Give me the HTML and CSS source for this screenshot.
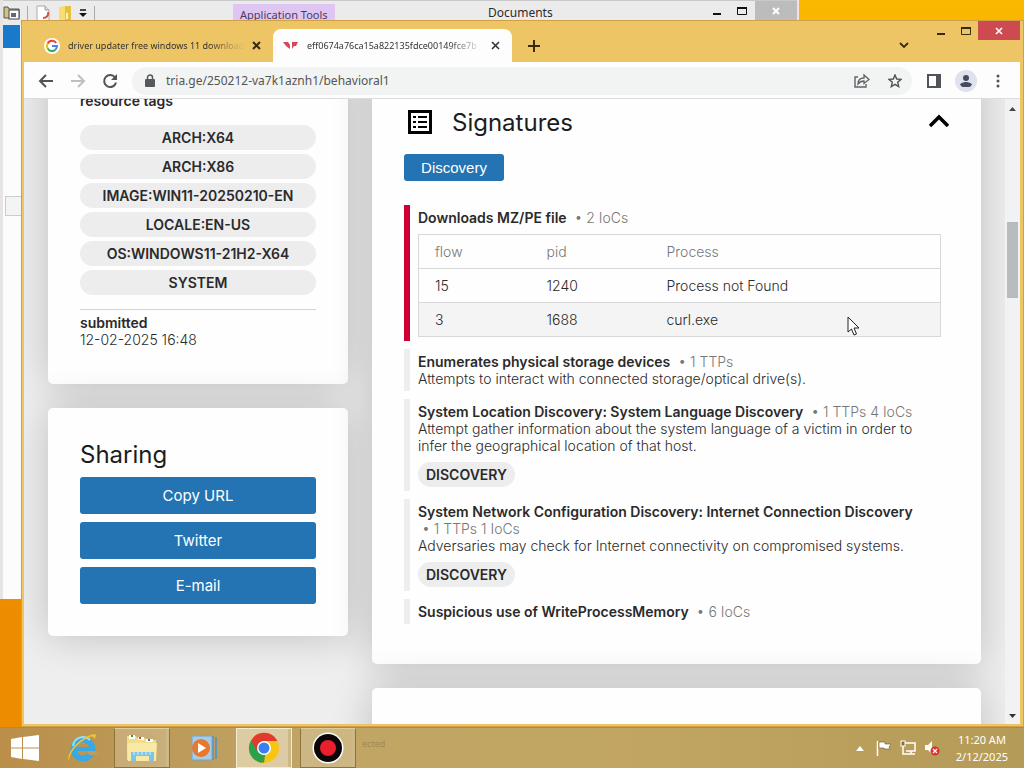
FILE: index.html
```html
<!DOCTYPE html>
<html lang="en">
<head>
    <meta charset="UTF-8">
    <meta name="viewport" content="width=device-width, initial-scale=1.0">
    <title>tria.ge - behavioral1</title>
    <link rel="stylesheet" href="styles.css">
</head>
<body>

<div class="desktop">

    <!-- explorer window behind the browser -->
    <div class="explorer">
        <div class="explorer-bar">
            <div class="quick">
                <svg width="17" height="16" viewBox="0 0 17 16"><path d="M1 2h4l1 2h10v9H1z" fill="#c9c583" stroke="#55584a"/><rect x="6" y="5" width="10" height="9" fill="#fff" stroke="#444"/><path d="M8 8h5v4H8z" fill="#667"/></svg>
                <span class="sep"></span>
                <svg width="16" height="16" viewBox="0 0 16 16"><path d="M2 1h8l4 4v11H2z" fill="#fff" stroke="#aaa"/><path d="M10 1v4h4" fill="#dde" stroke="#999"/><path d="M13 7c1 4-2 6-5 6" fill="none" stroke="#d8543c" stroke-width="2"/></svg>
                <svg width="14" height="16" viewBox="0 0 14 16"><path d="M1 2l6-1v14H1z" fill="#f7dd72"/><path d="M7 1h6v14H7z" fill="#e7bf45"/><path d="M8 8h2v6H8z" fill="#fff3b0"/></svg>
                <svg width="8" height="8" viewBox="0 0 8 8"><path d="M1 1h6" stroke="#111" stroke-width="1.5"/><path d="M0 4h8L4 8z" fill="#111"/></svg>
                <span class="sep"></span>
            </div>
            <span class="app-tools">Application Tools</span>
            <span class="explorer-title">Documents</span>
            <div class="win-buttons back">
                <button aria-label="Minimize"><svg width="8" height="10" viewBox="0 0 8 10"><path d="M0 8h8" stroke="#111" stroke-width="2"/></svg></button>
                <button aria-label="Maximize"><svg width="10" height="8" viewBox="0 0 10 8"><path d="M.5 1v6.5h9V1" fill="none" stroke="#111"/><path d="M0 1h10" stroke="#111" stroke-width="2"/></svg></button>
                <button class="close" aria-label="Close"><svg width="8" height="8" viewBox="0 0 8 8"><path d="M1 1l6 6M7 1L1 7" stroke="#fff" stroke-width="2"/></svg></button>
            </div>
        </div>
        <div class="file-tab"></div>
        <div class="nav-box"></div>
    </div>

    <!-- browser -->
    <div class="browser">
        <div class="tabstrip">
            <div class="tab">
                <svg width="16" height="16" viewBox="0 0 16 16"><circle cx="8" cy="8" r="8" fill="#fff"/><path d="M12.2 4.8A5 5 0 0 0 3.6 5.6" fill="none" stroke="#e94235" stroke-width="2"/><path d="M3.6 5.6a5 5 0 0 0 0 4.8" fill="none" stroke="#fabb05" stroke-width="2"/><path d="M3.6 10.4a5 5 0 0 0 7.8 1.3" fill="none" stroke="#34a853" stroke-width="2"/><path d="M11.4 11.7A5 5 0 0 0 13 8H8" fill="none" stroke="#4285f4" stroke-width="2"/></svg>
                <span class="tab-title">driver updater free windows 11 download</span>
                <button aria-label="Close tab"><svg width="9" height="9" viewBox="0 0 9 9"><path d="M1 1l7 7M8 1L1 8" stroke="#3a2a10" stroke-width="2"/></svg></button>
            </div>
            <div class="tab active">
                <svg width="16" height="16" viewBox="0 0 16 16"><path d="M0 4h5l2 3v4L3 8z" fill="#d9455a"/><path d="M9 4h6l-2 4h-2l-2 3z" fill="#d9455a"/></svg>
                <span class="tab-title">eff0674a76ca15a822135fdce00149fce7b</span>
                <button aria-label="Close tab"><svg width="9" height="9" viewBox="0 0 9 9"><path d="M1 1l7 7M8 1L1 8" stroke="#333" stroke-width="1.6"/></svg></button>
            </div>
            <button class="new-tab" aria-label="New tab"><svg width="12" height="12" viewBox="0 0 12 12"><path d="M6 0v12M0 6h12" stroke="#3a2a10" stroke-width="2"/></svg></button>
            <button class="tab-search" aria-label="Search tabs"><svg width="10" height="6" viewBox="0 0 10 6"><path d="M1 1l4 4 4-4" fill="none" stroke="#3a2a10" stroke-width="1.8"/></svg></button>
            <div class="win-buttons front">
                <button aria-label="Minimize"><svg width="8" height="10" viewBox="0 0 8 10"><path d="M0 8h8" stroke="#3a2a10" stroke-width="2"/></svg></button>
                <button aria-label="Maximize"><svg width="10" height="8" viewBox="0 0 10 8"><path d="M.5 1v6.5h9V1" fill="none" stroke="#3a2a10"/><path d="M0 1h10" stroke="#3a2a10" stroke-width="2"/></svg></button>
                <button class="close" aria-label="Close"><svg width="8" height="8" viewBox="0 0 8 8"><path d="M1 1l6 6M7 1L1 7" stroke="#fff" stroke-width="1.6"/></svg></button>
            </div>
        </div>

        <div class="toolbar">
            <button aria-label="Back"><svg width="16" height="16" viewBox="0 0 16 16"><path d="M15 8H2M8 2L2 8l6 6" fill="none" stroke="#505357" stroke-width="2"/></svg></button>
            <button aria-label="Forward"><svg width="16" height="16" viewBox="0 0 16 16"><path d="M1 8h13M8 2l6 6-6 6" fill="none" stroke="#bdbfc1" stroke-width="2"/></svg></button>
            <button aria-label="Reload"><svg width="16" height="16" viewBox="0 0 16 16"><path d="M13 4.5A6 6 0 1 0 14 9.5" fill="none" stroke="#505357" stroke-width="2"/><path d="M15 1v6H9z" fill="#505357"/></svg></button>
            <div class="omnibox">
                <svg width="10" height="13" viewBox="0 0 10 13"><rect x="0" y="5" width="10" height="8" rx="1" fill="#55585c"/><path d="M2.5 5V3.5a2.5 2.5 0 0 1 5 0V5" fill="none" stroke="#55585c" stroke-width="1.5"/></svg>
                <input type="text" aria-label="Address" value="tria.ge/250212-va7k1aznh1/behavioral1">
                <button aria-label="Share"><svg width="16" height="15" viewBox="0 0 16 15"><path d="M4 4H1v10h11v-3" fill="none" stroke="#5f6368" stroke-width="1.4"/><path d="M4 11c0-4 2-6 6-6V2l5 4.500-5 4V8C7 8 5.500 9 4 11z" fill="none" stroke="#5f6368" stroke-width="1.300"/></svg></button>
                <button aria-label="Bookmark"><svg width="14" height="14" viewBox="0 0 14 14"><path d="M7 1l1.700 4 4.300.4-3.300 2.900 1 4.300L7 10.300l-3.700 2.300 1-4.300L1 5.400 5.300 5z" fill="none" stroke="#505357" stroke-width="1.400"/></svg></button>
            </div>
            <button aria-label="Side panel"><svg width="14" height="14" viewBox="0 0 14 14"><rect x="1" y="1" width="12" height="12" fill="none" stroke="#505357" stroke-width="2"/><path d="M9 1h4v12H9z" fill="#505357"/></svg></button>
            <button class="avatar" aria-label="Profile"><svg width="14" height="14" viewBox="0 0 14 14"><circle cx="7" cy="4" r="3" fill="#454a5c"/><path d="M1 13v-2c0-2 4-3 6-3s6 1 6 3v2z" fill="#454a5c"/></svg></button>
            <button aria-label="Menu"><svg width="4" height="14" viewBox="0 0 4 14"><circle cx="2" cy="2" r="1.500" fill="#505357"/><circle cx="2" cy="7" r="1.500" fill="#505357"/><circle cx="2" cy="12" r="1.500" fill="#505357"/></svg></button>
        </div>

        <div class="viewport">
            <div class="page">
                <aside class="side">
                    <section class="card">
                        <b>resource tags</b>
                        <div class="tags">
                            <span class="tag">ARCH:X64</span>
                            <span class="tag">ARCH:X86</span>
                            <span class="tag">IMAGE:WIN11-20250210-EN</span>
                            <span class="tag">LOCALE:EN-US</span>
                            <span class="tag">OS:WINDOWS11-21H2-X64</span>
                            <span class="tag">SYSTEM</span>
                        </div>
                        <div class="submitted">
                            <b>submitted</b>
                            <span>12-02-2025 16:48</span>
                        </div>
                    </section>

                    <section class="card">
                        <h2>Sharing</h2>
                        <div class="share">
                            <button>Copy URL</button>
                            <button>Twitter</button>
                            <button>E-mail</button>
                        </div>
                    </section>
                </aside>

                <main class="content">
                    <section class="card">
                        <div class="card-head">
                            <svg width="24" height="24" viewBox="0 0 24 24"><rect x="1.500" y="1.500" width="21" height="21" fill="none" stroke="#000" stroke-width="3"/><path d="M5 7h3M5 12h3M5 17h3" stroke="#000" stroke-width="2"/><path d="M10 7h9M10 12h9M10 17h9" stroke="#000" stroke-width="2"/></svg>
                            <h2>Signatures</h2>
                            <button aria-label="Collapse"><svg width="20" height="16" viewBox="0 0 20 16"><path d="M1 12l9-9 9 9" fill="none" stroke="#000" stroke-width="3.500"/></svg></button>
                        </div>
                        <button class="filter">Discovery</button>

                        <div class="signatures">
                            <article class="sig bad">
                                <b>Downloads MZ/PE file</b> <span class="count">• 2 IoCs</span>
                                <table>
                                    <thead>
                                        <tr><th class="flow">flow</th><th class="pid">pid</th><th>Process</th></tr>
                                    </thead>
                                    <tbody>
                                        <tr><td>15</td><td>1240</td><td>Process not Found</td></tr>
                                        <tr><td>3</td><td>1688</td><td>curl.exe</td></tr>
                                    </tbody>
                                </table>
                            </article>
                            <article class="sig">
                                <b>Enumerates physical storage devices</b> <span class="count">• 1 TTPs</span>
                                <p>Attempts to interact with connected storage/optical drive(s).</p>
                            </article>
                            <article class="sig">
                                <b>System Location Discovery: System Language Discovery</b> <span class="count">• 1 TTPs 4 IoCs</span>
                                <p>Attempt gather information about the system language of a victim in order to infer the geographical location of that host.</p>
                                <span class="tag">DISCOVERY</span>
                            </article>
                            <article class="sig">
                                <b>System Network Configuration Discovery: Internet Connection Discovery</b> <span class="count">• 1 TTPs 1 IoCs</span>
                                <p>Adversaries may check for Internet connectivity on compromised systems.</p>
                                <span class="tag">DISCOVERY</span>
                            </article>
                            <article class="sig">
                                <b>Suspicious use of WriteProcessMemory</b> <span class="count">• 6 IoCs</span>
                            </article>
                        </div>
                    </section>
                    <section class="card next"></section>
                </main>
            </div>

            <div class="scrollbar">
                <svg width="7" height="4" viewBox="0 0 7 4"><path d="M0 4h7L3.500 0z" fill="#444"/></svg>
                <div class="thumb"></div>
                <svg width="7" height="4" viewBox="0 0 7 4"><path d="M0 0h7L3.500 4z" fill="#333"/></svg>
            </div>
        </div>
    </div>
</div>

<div class="taskbar">
    <button class="start" aria-label="Start"><svg width="28" height="26" viewBox="0 0 28 26"><path d="M0 4l11-2v10.500H0zM12 2l16-2v12.500H12zM0 13.500h11V24L0 22zM12 13.500h16V26l-16-2z" fill="#fff"/></svg></button>
    <button class="task" aria-label="Internet Explorer"><svg width="32" height="32" viewBox="0 0 32 32"><circle cx="17" cy="17" r="9.500" fill="none" stroke="#37a9e4" stroke-width="6"/><path d="M21 19h10v4h-8z" fill="#bf9c57"/><path d="M9 15h20v4H9z" fill="#37a9e4"/><path d="M7 14a10 10 0 0 1 17-6" fill="none" stroke="#9be0fb" stroke-width="2"/><path d="M3 29C-1 22 14 4 29 2c2 1 0 4-1 5 0-3-2-3-6-1C12 10 3 21 3 29z" fill="#f8c22e"/></svg></button>
    <button class="task open" aria-label="File Explorer"><svg width="32" height="32" viewBox="0 0 32 32"><path d="M1 4h9l1 2h8l1 2h10v20H1z" fill="#f0dc8a"/><path d="M3 3h6v4H3zM12 5h6v3h-6zM20 7h7v3h-7z" fill="#fff"/><path d="M5 3h2v2H5z" fill="#2e9a4a"/><path d="M13 5h2v2h-2z" fill="#d34a37"/><path d="M22 7h2v2h-2z" fill="#2c78c4"/><path d="M1 11h30l-1 18H2z" fill="#f8eaa4"/><path d="M5 30V20h23v10h-5v-6H10v6z" fill="#7cc4ea"/><path d="M8 19v4M12 19v4M16 19v4M20 19v4M24 19v4" stroke="#d6f1fc"/></svg></button>
    <button class="task" aria-label="Media Player"><svg width="26" height="26" viewBox="0 0 26 26"><path d="M1 1h20v24H1z" fill="#a9cbe4"/><path d="M22 1v24M25 2v22" stroke="#4c91c7" stroke-width="1.500"/><path d="M1 1h20v24H1z" fill="none" stroke="#6ea6cf"/><circle cx="10" cy="13" r="9" fill="#e7782c"/><path d="M7 8l8 5-8 5z" fill="#fff"/></svg></button>
    <button class="task open current" aria-label="Chrome"><svg width="32" height="32" viewBox="0 0 32 32"><circle cx="16" cy="16" r="15" fill="#f9c513"/><path d="M16 16L3 8.500A15 15 0 0 0 14 31z" fill="#2da04a"/><path d="M16 31l-5-3 7-12z" fill="#2da04a"/><path d="M3 8.500a15 15 0 0 1 26.500.500H16L10 20z" fill="#e23b2e"/><circle cx="16" cy="16" r="7" fill="#fff"/><circle cx="16" cy="16" r="5.500" fill="#3a7ff0"/></svg></button>
    <button class="task open" aria-label="Recorder"><svg width="32" height="32" viewBox="0 0 32 32"><circle cx="16" cy="16" r="15.500" fill="#fff"/><circle cx="16" cy="16" r="14" fill="#0c0607"/><circle cx="16" cy="16" r="8" fill="#e9202c"/></svg></button>
    <span class="ghost">ected</span>
    <div class="tray">
        <svg width="8" height="5" viewBox="0 0 8 5"><path d="M0 5h8L4 0z" fill="#fff"/></svg>
        <svg class="flag" width="16" height="16" viewBox="0 0 16 16"><path d="M1.500 1v15" stroke="#fff" stroke-width="1.500"/><path d="M3 2h6v2h6l-2 3 1 2H8V8H3z" fill="#fff" stroke="#6d5424" stroke-width=".600"/></svg>
        <svg width="16" height="16" viewBox="0 0 16 16"><path d="M5 3h10v8H6" fill="none" stroke="#fff" stroke-width="1.500"/><path d="M7 14h8M11 11v3M3 6v8h4" fill="none" stroke="#fff" stroke-width="1.500"/><rect x="1" y="1" width="4" height="5" fill="#8b6f36" stroke="#fff"/></svg>
        <svg width="16" height="16" viewBox="0 0 16 16"><path d="M1 5h3l4-4v13l-4-4H1z" fill="#fff"/><circle cx="11" cy="11" r="4.500" fill="#d8342c"/><path d="M9 9l4 4M13 9l-4 4" stroke="#fff" stroke-width="1.300"/></svg>
        <div class="clock">
            <span>11:20 AM</span>
            <span>2/12/2025</span>
        </div>
    </div>
</div>

<svg class="cursor" width="13" height="20" viewBox="0 0 13 20"><path d="M1 1v15l3.500-3 2.500 6 2.500-1L7 12h5z" fill="#fff" stroke="#222"/></svg>

</body>
</html>
```
FILE: styles.css
```css
* {
    box-sizing: border-box;
}

body {
    margin: 0;
    height: 100vh;
    display: flex;
    flex-direction: column;
    overflow: hidden;
    font-family: "Inter", sans-serif;
    font-size: 14px;
    line-height: 17px;
    color: #2a2a2a;
}

button {
    margin: 0;
    padding: 0;
    border: 0;
    background: none;
    font: inherit;
    color: inherit;
    display: flex;
    align-items: center;
    justify-content: center;
}

svg {
    display: block;
    flex: none;
}

h2 {
    margin: 0;
    font-size: 24px;
    line-height: 29px;
    font-weight: 400;
    color: #1c1c1c;
}

p {
    margin: 0;
}

b {
    font-weight: 600;
}

/* desktop and windows */
.desktop {
    position: relative;
    flex: 1;
    min-height: 0;
    background: linear-gradient(#fbb800, #ee8c00 85%);
}

.explorer {
    position: absolute;
    top: 0;
    left: 0;
    width: 78%;
    height: 599px;
    background: #fcfcfc;
    border-left: 3px solid #e6e4e4;
    border-right: 2px solid #f6dfe2;
}

.explorer-bar {
    position: relative;
    display: flex;
    justify-content: space-between;
    height: 25px;
    background: #ebebeb;
    border-top: 1px solid #c9c9c9;
    font-family: "Noto Sans", sans-serif;
    color: #2b2b2b;
}

.quick {
    display: flex;
    align-items: center;
    gap: 7px;
}

.sep {
    width: 1px;
    height: 14px;
    background: #aaa;
}

.app-tools {
    position: absolute;
    left: 230px;
    top: 3px;
    padding: 2px 7px;
    background: #dfc6f2;
    font-size: 11px;
    color: #4a3a60;
}

.explorer-title {
    position: absolute;
    left: 485px;
    top: 3px;
    font-size: 12px;
}

.file-tab {
    width: 17px;
    height: 23px;
    background: #1979ca;
}

.nav-box {
    width: 17px;
    height: 20px;
    margin: 148px 0 0 2px;
    border: 1px solid #ccc;
    background: #f2f5f2;
}

.win-buttons {
    display: flex;
    align-items: flex-start;
}

.win-buttons button {
    width: 25px;
    height: 19px;
}

.win-buttons .close {
    width: 42px;
}

.back .close {
    background: #bcbcbc;
}

.front .close {
    background: #cd4a50;
}

.browser {
    position: absolute;
    top: 20px;
    left: 21px;
    right: 0;
    bottom: 0;
    display: flex;
    flex-direction: column;
    background: #eec564;
    border: 1px solid #cfa047;
    padding: 0 3px 2px 2px;
}

.tabstrip {
    display: flex;
    height: 41px;
    padding-left: 10px;
    font-family: "Noto Sans", sans-serif;
    font-size: 9px;
}

.tab {
    display: flex;
    align-items: center;
    gap: 8px;
    width: 239px;
    height: 33px;
    margin-top: 8px;
    padding: 0 12px 0 10px;
    border-radius: 8px 8px 0 0;
}

.tab.active {
    background: #fdfdfd;
}

.tab-title {
    flex: 1;
    overflow: hidden;
    white-space: nowrap;
    color: #333;
    -webkit-mask-image: linear-gradient(90deg, #000 80%, transparent);
    mask-image: linear-gradient(90deg, #000 80%, transparent);
}

.new-tab {
    width: 44px;
    height: 33px;
    margin-top: 8px;
}

.tab-search {
    margin: 12px 12px 0 auto;
    width: 24px;
    height: 24px;
}

.tab-search + .win-buttons {
    padding-left: 0;
}

.toolbar {
    display: flex;
    align-items: center;
    height: 37px;
    padding: 1px 6px 0;
    background: #fdfdfd;
    border-bottom: 1px solid #dcdcdc;
}

.toolbar > button {
    width: 32px;
    height: 28px;
}

.omnibox {
    flex: 1;
    display: flex;
    align-items: center;
    gap: 11px;
    height: 28px;
    margin: 0 6px;
    padding: 0 6px 0 13px;
    border-radius: 14px;
    background: #f2f3f3;
}

.omnibox input {
    flex: 1;
    min-width: 0;
    padding: 0;
    border: 0;
    background: none;
    font-family: "Noto Sans", sans-serif;
    font-size: 12px;
    color: #555;
}

.omnibox button {
    width: 22px;
    height: 22px;
}

.avatar svg {
    box-sizing: content-box;
    padding: 4px;
    border-radius: 50%;
    background: #dfe1ed;
}

/* page */
.viewport {
    flex: 1;
    min-height: 0;
    display: flex;
    overflow: hidden;
    background: #eeeeee;
}

.page {
    flex: 1;
    display: grid;
    grid-template-columns: 300px 1fr;
    align-items: start;
    gap: 24px;
    margin-top: -39px;
    padding: 0 24px;
}

.side,
.content {
    display: flex;
    flex-direction: column;
    gap: 24px;
}

.card {
    padding: 32px;
    border-radius: 5px;
    background: #fefefe;
    box-shadow: 0 0 40px rgba(0, 0, 0, 0.2);
}

.card.next {
    height: 200px;
}

.tags {
    display: flex;
    flex-direction: column;
    gap: 4px;
    margin: 16px 0 14px;
}

.tag {
    display: block;
    width: fit-content;
    padding: 4px 8px;
    border-radius: 13px;
    background: #ededed;
    font-weight: 600;
    text-align: center;
}

.tags .tag {
    width: auto;
}

.submitted {
    display: flex;
    flex-direction: column;
    margin-bottom: 4px;
    padding-top: 4px;
    border-top: 1px solid #d4d4d4;
    font-weight: 300;
}

.share {
    display: flex;
    flex-direction: column;
    gap: 8px;
    margin-top: 8px;
}

.share button,
.filter {
    border-radius: 3px;
    background: #2473b2;
    color: #fff;
    font-size: 15px;
}

.share button {
    height: 37px;
}

.card-head {
    display: flex;
    align-items: center;
    gap: 20px;
    height: 60px;
    margin-bottom: 2px;
    padding-left: 4px;
}

.card-head button {
    margin-left: auto;
}

.filter {
    width: 100px;
    height: 27px;
    font-family: "Liberation Sans", Arial, sans-serif;
}

.signatures {
    display: flex;
    flex-direction: column;
    gap: 8px;
    margin: 24px 0 8px;
    font-weight: 300;
}

.sig {
    padding: 4px 8px;
    border-left: 6px solid #eeeeee;
}

.sig.bad {
    border-left-color: #cc0033;
}

.sig .tag {
    margin-top: 8px;
}

.count {
    display: inline-block;
    margin-left: 4px;
    color: #777;
}

table {
    width: 100%;
    margin-top: 8px;
    border: 1px solid #d8d8d8;
    border-collapse: collapse;
    table-layout: fixed;
}

th,
td {
    height: 34px;
    padding: 0 16px;
    border-top: 1px solid #d8d8d8;
    text-align: left;
    font-weight: 300;
}

th {
    color: #777;
}

.flow {
    width: 112px;
}

.pid {
    width: 120px;
}

tbody tr:nth-child(even) {
    background: #f4f4f4;
}

.scrollbar {
    display: flex;
    flex-direction: column;
    align-items: center;
    justify-content: space-between;
    width: 15px;
    padding: 8px 0 6px;
    background: #f0f2f4;
}

.thumb {
    width: 11px;
    height: 76px;
    margin-bottom: 306px;
    background: #b9bcbf;
}

/* taskbar */
.taskbar {
    display: flex;
    gap: 2px;
    height: 41px;
    background: linear-gradient(90deg, #b98f4a, #c0a566 30%, #c2a562 60%, #b59b58);
    border-top: 1px solid #b8892f;
    font-family: "Noto Sans", sans-serif;
}

.start {
    width: 50px;
}

.task {
    width: 60px;
}

.task.open {
    width: 56px;
    margin-right: 2px;
    background: rgba(255, 255, 255, 0.2);
    border: 1px solid #8e7238;
    border-top-color: #e0cc9a;
    box-shadow: inset -4px 0 0 -1px #cdb987;
}

.task.current {
    margin-right: 6px;
    background: #dccba3;
    border-color: #f5ead0;
}

.ghost {
    padding-top: 7px;
    margin-left: 2px;
    font-size: 9px;
    color: #a08a50;
}

.tray {
    display: flex;
    align-items: center;
    gap: 8px;
    margin-left: auto;
    padding-right: 16px;
}

.flag {
    margin-left: 4px;
}

.clock {
    display: flex;
    flex-direction: column;
    align-items: center;
    margin-left: 8px;
    font-size: 11px;
    color: #fff;
}

.cursor {
    position: absolute;
    left: 847px;
    top: 316px;
}
```
